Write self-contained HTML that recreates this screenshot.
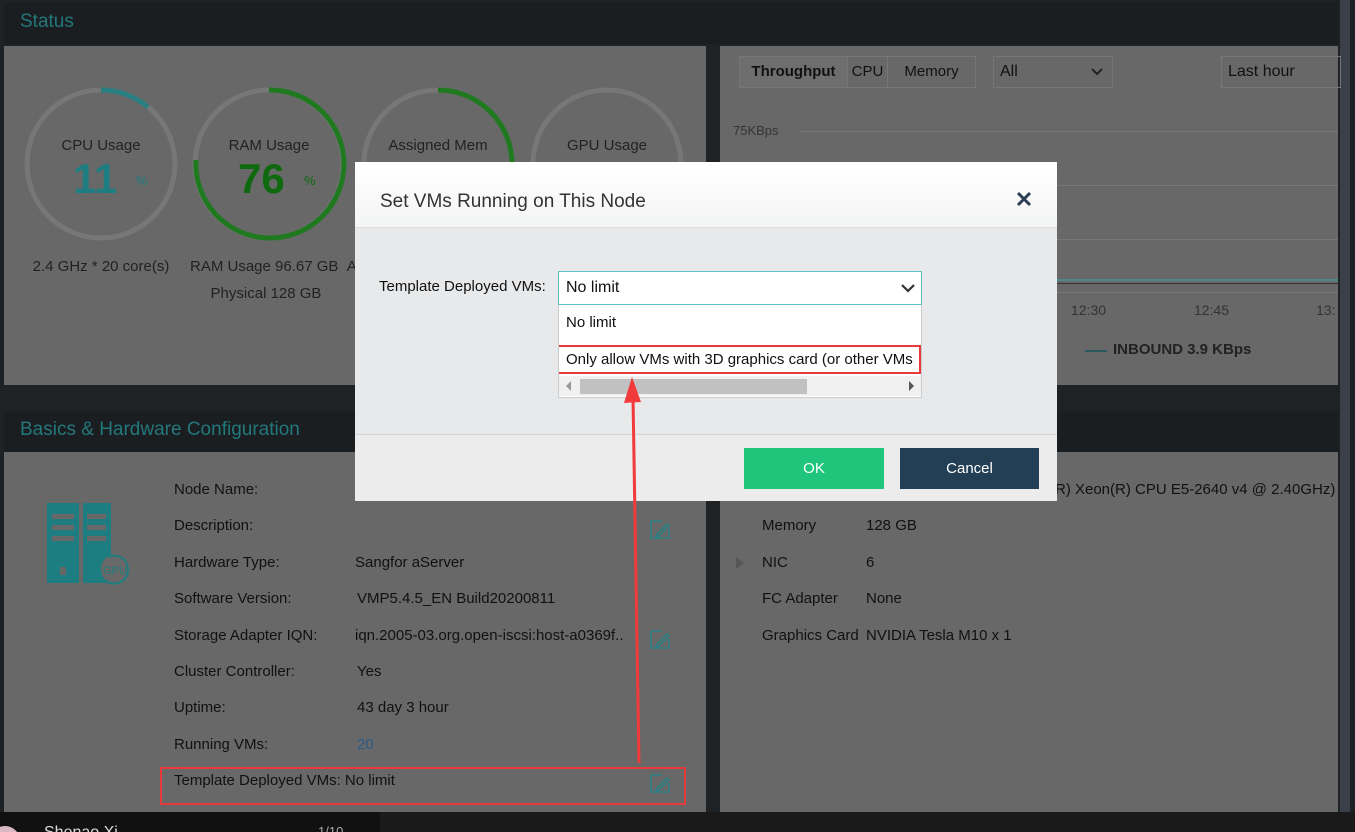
<!DOCTYPE html>
<html style="width:1355px;height:832px;overflow:hidden"><head><meta charset="utf-8"><style>
*{margin:0;padding:0;box-sizing:border-box}
body{width:1355px;height:832px;background:#1f2225;font-family:"Liberation Sans",sans-serif;position:relative;overflow:hidden;color:#111}
.a{position:absolute}
.hdr{background:#1b1e21;color:#23787b;font-size:19px;padding-left:16px}
.panel{background:#686868}
.t{position:absolute;font-size:15px;color:#111;white-space:nowrap}
.gl{font-size:15px;color:#222;text-align:center}
</style></head><body>
<div class="a hdr" style="left:4px;top:2px;width:1334px;height:42px;line-height:40px">Status</div>
<div class="a panel" style="left:4px;top:46px;width:702px;height:339px"></div>
<div class="a panel" style="left:720px;top:46px;width:618px;height:339px"></div>
<div class="a" style="left:1340px;top:0;width:10px;height:812px;background:#3a3f4a"></div>

<svg class="a" style="left:0;top:80px" width="706" height="180">
<g fill="none" stroke-width="5">
<circle cx="101" cy="84" r="74" stroke="#777"/>
<path d="M101 10 A74 74 0 0 1 148 27" stroke="#2a7f82"/>
<circle cx="269" cy="84" r="74" stroke="#777"/>
<path d="M269 10 A74 74 0 1 1 196 80" stroke="#1f7a1f"/>
<circle cx="438" cy="84" r="74" stroke="#777"/>
<path d="M438 10 A74 74 0 0 1 512 84" stroke="#1f7a1f"/>
<circle cx="607" cy="84" r="74" stroke="#777"/>
</g></svg>
<div class="a gl" style="left:31px;top:137px;width:140px">CPU Usage</div>
<div class="a" style="left:73px;top:155px;font-size:42px;font-weight:bold;color:#1e7d80">11</div>
<div class="a" style="left:136px;top:173px;font-size:13px;color:#1e7d80">%</div>
<div class="a gl" style="left:199px;top:137px;width:140px">RAM Usage</div>
<div class="a" style="left:238px;top:155px;font-size:42px;font-weight:bold;color:#0f6a0f">76</div>
<div class="a" style="left:304px;top:173px;font-size:13px;color:#0f6a0f">%</div>
<div class="a gl" style="left:368px;top:137px;width:140px">Assigned Mem</div>
<div class="a gl" style="left:537px;top:137px;width:140px">GPU Usage</div>
<div class="a gl" style="left:26px;top:258px;width:150px">2.4 GHz * 20 core(s)</div>
<div class="a gl" style="left:190px;top:258px;width:180px;text-align:left">RAM Usage 96.67 GB &nbsp;A</div>
<div class="a gl" style="left:196px;top:285px;width:140px">Physical 128 GB</div>

<div class="a" style="left:739px;top:56px;width:237px;height:32px;border:1px solid #777;display:flex;font-size:15px">
<div style="width:107px;line-height:30px;text-align:center;font-weight:bold;background:#6e6e6e">Throughput</div>
<div style="width:40px;line-height:30px;text-align:center;border-left:1px solid #777">CPU</div>
<div style="flex:1;line-height:30px;text-align:center;border-left:1px solid #777">Memory</div></div>
<div class="a" style="left:993px;top:56px;width:120px;height:32px;border:1px solid #777;font-size:16px;line-height:30px;padding-left:6px">All
<svg class="a" style="right:8px;top:10px" width="14" height="10"><path d="M2 2 L7 7 L12 2" fill="none" stroke="#222" stroke-width="2"/></svg></div>
<div class="a" style="left:1221px;top:56px;width:120px;height:32px;border:1px solid #777;font-size:16px;line-height:30px;padding-left:6px">Last hour</div>
<div class="a" style="left:733px;top:123px;font-size:13px;color:#333">75KBps</div>
<div class="a" style="left:800px;top:131px;width:538px;height:1px;background:#777"></div>
<div class="a" style="left:800px;top:185px;width:538px;height:1px;background:#777"></div>
<div class="a" style="left:800px;top:239px;width:538px;height:1px;background:#777"></div>
<div class="a" style="left:1057px;top:279px;width:281px;height:2px;background:#4a8a8c"></div>
<div class="a" style="left:1057px;top:283px;width:281px;height:1px;background:#333"></div>
<div class="a" style="left:1057px;top:292px;width:281px;height:1px;background:#777"></div>
<div class="a" style="left:1071px;top:302px;font-size:14px;color:#333">12:30</div>
<div class="a" style="left:1194px;top:302px;font-size:14px;color:#333">12:45</div>
<div class="a" style="left:1316px;top:302px;font-size:14px;color:#333">13:</div>
<div class="a" style="left:1085px;top:350px;width:22px;height:2px;background:#2a5a5c"></div>
<div class="a" style="left:1113px;top:341px;font-size:15px;font-weight:bold;color:#222">INBOUND 3.9 KBps</div>

<div class="a hdr" style="left:4px;top:412px;width:1334px;height:40px;line-height:36px">Basics &amp; Hardware Configuration</div>
<div class="a panel" style="left:4px;top:452px;width:702px;height:360px"></div>
<div class="a panel" style="left:720px;top:452px;width:618px;height:360px"></div>
<svg class="a" style="left:46px;top:503px" width="90" height="82">
<rect x="1" y="0" width="32" height="80" fill="#1e7d80"/><rect x="37" y="0" width="28" height="80" fill="#1e7d80"/>
<g fill="#686868"><rect x="6" y="11" width="22" height="5"/><rect x="6" y="22" width="22" height="5"/><rect x="6" y="33" width="22" height="5"/><rect x="41" y="11" width="19" height="5"/><rect x="41" y="22" width="19" height="5"/><rect x="41" y="33" width="19" height="5"/><rect x="14" y="64" width="6" height="8"/></g>
<circle cx="70" cy="66" r="15" fill="#686868"/>
<path d="M62 54 A14 14 0 1 1 60 78" fill="none" stroke="#1e7d80" stroke-width="2"/>
<text x="69" y="71" font-size="11" fill="#1e7d80" text-anchor="middle" font-family="Liberation Sans">GPU</text></svg>
<div class="t" style="left:174px;top:481px">Node Name:</div>
<div class="t" style="left:174px;top:517px">Description:</div>
<div class="t" style="left:174px;top:554px">Hardware Type:</div><div class="t" style="left:355px;top:554px">Sangfor aServer</div>
<div class="t" style="left:174px;top:590px">Software Version:</div><div class="t" style="left:357px;top:590px">VMP5.4.5_EN Build20200811</div>
<div class="t" style="left:174px;top:627px">Storage Adapter IQN:</div><div class="t" style="left:355px;top:627px">iqn.2005-03.org.open-iscsi:host-a0369f..</div>
<div class="t" style="left:174px;top:663px">Cluster Controller:</div><div class="t" style="left:357px;top:663px">Yes</div>
<div class="t" style="left:174px;top:699px">Uptime:</div><div class="t" style="left:357px;top:699px">43 day 3 hour</div>
<div class="t" style="left:174px;top:736px">Running VMs:</div><div class="t" style="left:357px;top:736px;color:#2a5a8a">20</div>
<div class="t" style="left:174px;top:772px">Template Deployed VMs:&nbsp;No limit</div>
<svg class="a" style="left:649px;top:518px" width="24" height="280"><g fill="none" stroke="#2a7f82" stroke-width="1.6">
<path d="M2 3 H13 M2 3 V20 H20 V11 M8 16 L18 6 L20 8 L10 18 L7 19 Z"/>
<path transform="translate(0,110)" d="M2 3 H13 M2 3 V20 H20 V11 M8 16 L18 6 L20 8 L10 18 L7 19 Z"/>
<path transform="translate(0,254)" d="M2 3 H13 M2 3 V20 H20 V11 M8 16 L18 6 L20 8 L10 18 L7 19 Z"/></g></svg>
<div class="a" style="left:160px;top:767px;width:526px;height:38px;border:2px solid #e83a3a"></div>

<div class="t" style="left:1055px;top:481px">R) Xeon(R) CPU E5-2640 v4 @ 2.40GHz)</div>
<div class="t" style="left:762px;top:517px">Memory</div><div class="t" style="left:866px;top:517px">128 GB</div>
<div class="a" style="left:736px;top:557px;width:0;height:0;border-left:8px solid #555;border-top:6px solid transparent;border-bottom:6px solid transparent"></div>
<div class="t" style="left:762px;top:554px">NIC</div><div class="t" style="left:866px;top:554px">6</div>
<div class="t" style="left:762px;top:590px">FC Adapter</div><div class="t" style="left:866px;top:590px">None</div>
<div class="t" style="left:762px;top:627px">Graphics Card</div><div class="t" style="left:866px;top:627px">NVIDIA Tesla M10 x 1</div>

<div class="a" style="left:0;top:812px;width:1355px;height:20px;overflow:hidden">
<div class="a" style="left:0;top:0;width:380px;height:20px;background:#111"></div>
<div class="a" style="left:380px;top:0;width:975px;height:20px;background:#1a1a1a"></div>
<div class="a" style="left:-10px;top:14px;width:30px;height:30px;border-radius:50%;background:#d9b8c4"></div>
<div class="a" style="left:44px;top:12px;font-size:16px;color:#ddd">Shenao Xi</div>
<div class="a" style="left:318px;top:12px;font-size:13px;color:#aaa">1/10</div>
</div>

<div class="a" style="left:355px;top:162px;width:702px;height:339px;background:#e8e9ea">
<div style="height:66px;background:linear-gradient(#fff,#f3f4f4);border-bottom:1px solid #dcdcdc;position:relative">
<div class="a" style="left:25px;top:29px;font-size:19px;color:#333">Set VMs Running on This Node</div>
<svg class="a" style="left:661px;top:29px" width="16" height="16"><path d="M2 2 L14 14 M14 2 L2 14" stroke="#2a3d52" stroke-width="3"/></svg></div>
<div style="position:absolute;left:0;top:272px;width:702px;height:1px;background:#d4d4d4"></div>
<div style="position:absolute;left:0;top:273px;width:702px;height:66px;background:#ececec"></div>
</div>
<div class="t" style="left:379px;top:278px;color:#111">Template Deployed VMs:</div>
<div class="a" style="left:558px;top:271px;width:364px;height:34px;background:#fff;border:1px solid #5fc3c6;font-size:16px;line-height:32px;padding-left:7px">No limit
<svg class="a" style="right:5px;top:10px" width="16" height="12"><path d="M2 3 L8 9 L14 3" fill="none" stroke="#333" stroke-width="2.2"/></svg></div>
<div class="a" style="left:558px;top:305px;width:364px;height:93px;background:#fff;border:1px solid #ccc;border-top:none;overflow:hidden">
<div class="a" style="left:7px;top:9px;font-size:15px">No limit</div>
<div class="a" style="left:-2px;top:40px;width:364px;height:29px;border:2px solid #e83a3a;font-size:15px;line-height:25px;padding-left:7px;white-space:nowrap;overflow:hidden">Only allow VMs with 3D graphics card (or other VMs</div>
<div class="a" style="left:0;top:71px;width:364px;height:20px;background:#f0f0f0">
<div class="a" style="left:7px;top:5px;width:0;height:0;border-right:5px solid #999;border-top:5px solid transparent;border-bottom:5px solid transparent"></div>
<div class="a" style="left:21px;top:3px;width:227px;height:15px;background:#c1c1c1"></div>
<div class="a" style="left:350px;top:5px;width:0;height:0;border-left:5px solid #555;border-top:5px solid transparent;border-bottom:5px solid transparent"></div></div></div>
<div class="a" style="left:744px;top:448px;width:140px;height:41px;background:#1ec57a;color:#fff;font-size:15px;text-align:center;line-height:41px">OK</div>
<div class="a" style="left:900px;top:448px;width:139px;height:41px;background:#233f55;color:#fff;font-size:15px;text-align:center;line-height:41px">Cancel</div>

<svg class="a" style="left:620px;top:375px" width="30" height="390"><path d="M13 22 L19 388" stroke="#f23a3a" stroke-width="3"/><path d="M12 2 L4 28 L21 27 Z" fill="#f23a3a"/></svg>
</body></html>
